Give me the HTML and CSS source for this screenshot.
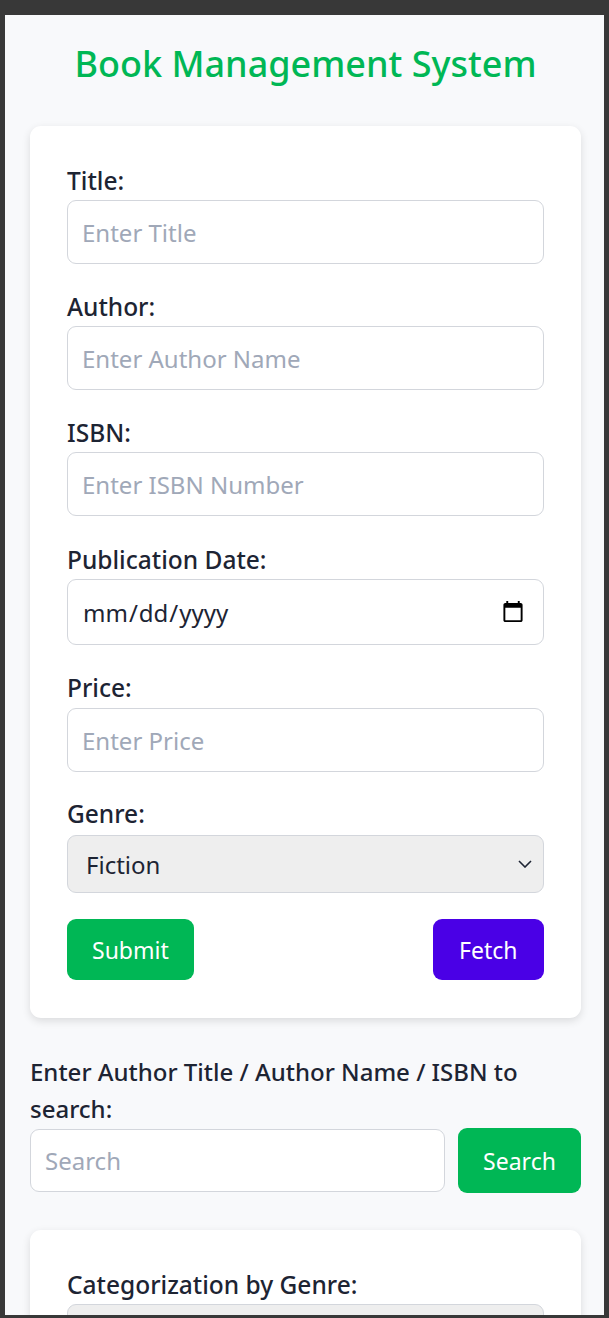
FILE: index.html
```html
<!DOCTYPE html>
<html lang="en">
<head>
<meta charset="utf-8">
<title>Book Management System</title>
<link rel="stylesheet" href="styles.css">
</head>
<body>
<div class="frame">
  <div class="page">
    <h1 class="title">Book Management System</h1>

    <form class="card">
      <div class="field f-title">
        <label class="label" for="title">Title:</label>
        <input class="input" id="title" type="text" placeholder="Enter Title">
      </div>
      <div class="field f-author">
        <label class="label" for="author">Author:</label>
        <input class="input" id="author" type="text" placeholder="Enter Author Name">
      </div>
      <div class="field f-isbn">
        <label class="label" for="isbn">ISBN:</label>
        <input class="input" id="isbn" type="text" placeholder="Enter ISBN Number">
      </div>
      <div class="field f-date">
        <label class="label" for="date">Publication Date:</label>
        <input class="input input-date" id="date" type="date">
      </div>
      <div class="field f-price">
        <label class="label" for="price">Price:</label>
        <input class="input" id="price" type="text" placeholder="Enter Price">
      </div>
      <div class="field f-genre">
        <label class="label" for="genre">Genre:</label>
        <div class="select-wrap">
          <select class="select" id="genre">
            <option>Fiction</option>
            <option>Non-Fiction</option>
            <option>Science</option>
          </select>
          <svg class="chevron" width="14" height="8" viewBox="0 0 14 8" aria-hidden="true"><path d="M1 1l6 6 6-6" fill="none" stroke="#1d2433" stroke-width="1.6"/></svg>
        </div>
      </div>
      <div class="actions">
        <button type="button" class="btn btn-green">Submit</button>
        <button type="button" class="btn btn-purple">Fetch</button>
      </div>
    </form>

    <div class="search">
      <label class="search-label" for="search">Enter Author Title / Author Name / ISBN to search:</label>
      <div class="search-row">
        <input class="input search-input" id="search" type="text" placeholder="Search">
        <button type="button" class="btn btn-green btn-search">Search</button>
      </div>
    </div>

    <div class="card card-genre">
      <label class="label" for="cat">Categorization by Genre:</label>
      <div class="select-wrap">
        <select class="select" id="cat">
          <option></option>
        </select>
        <svg class="chevron" width="14" height="8" viewBox="0 0 14 8" aria-hidden="true"><path d="M1 1l6 6 6-6" fill="none" stroke="#1d2433" stroke-width="1.6"/></svg>
      </div>
    </div>
  </div>
</div>
</body>
</html>
```

FILE: styles.css
```css
html, body {
  margin: 0;
  padding: 0;
  background: #383838;
  height: 1318px;
  overflow: hidden;
}

.frame {
  margin: 15px 5px 0 5px;
  height: 1300px;
  overflow: hidden;
  background: #f8f9fb;
}

.page {
  padding: 0 23px 0 25px;
  font-family: "Noto Sans", sans-serif;
  color: #1d2433;
}

.title {
  margin: 0;
  padding-top: 27px;
  height: 111px;
  box-sizing: border-box;
  font-size: 36px;
  line-height: 44px;
  font-weight: 500;
  color: #00b755;
  text-align: center;
}

.card {
  background: #fff;
  border-radius: 11px;
  box-shadow: 0 3px 8px rgba(0, 0, 0, 0.12);
  padding: 40px 37px 38px 37px;
  display: flex;
  flex-direction: column;
}

.field {
  display: flex;
  flex-direction: column;
  margin-bottom: 28px;
}

.f-isbn {
  margin-bottom: 29px;
}

.f-date {
  margin-bottom: 28px;
}

.f-price {
  margin-bottom: 27px;
}

.f-price .label {
  margin-bottom: 5px;
}

.f-genre {
  margin-bottom: 26px;
}

.f-genre .label {
  margin-bottom: 6px;
}

.label {
  font-size: 24.5px;
  line-height: 30px;
  margin-bottom: 4px;
  font-weight: 500;
  color: #1d2433;
}

.input {
  box-sizing: border-box;
  height: 64px;
  width: 100%;
  border: 1.5px solid #d3d6dc;
  border-radius: 9px;
  padding: 0 14px;
  font-family: inherit;
  font-size: 24px;
  color: #1d2433;
  background: #fff;
  outline: none;
}

.input::placeholder {
  color: #a0a8b8;
}

.input-date {
  height: 66px;
  padding-left: 14px;
  padding-right: 16px;
}

.select-wrap {
  position: relative;
}

.select {
  box-sizing: border-box;
  display: block;
  height: 58px;
  width: 100%;
  border: 1.5px solid #d3d6dc;
  border-radius: 9px;
  padding: 0 16px 0 18px;
  font-family: inherit;
  font-size: 24px;
  color: #1d2433;
  background: #eeeeee;
  appearance: none;
  -webkit-appearance: none;
}

.chevron {
  position: absolute;
  right: 12px;
  top: 25px;
  pointer-events: none;
}

.actions {
  display: flex;
  justify-content: space-between;
}

.btn {
  height: 61px;
  border: none;
  border-radius: 9px;
  padding: 0 25px;
  font-family: inherit;
  font-size: 23px;
  color: #fff;
}

.btn-green {
  background: #00b755;
}

.btn-purple {
  background: #4a00e6;
  padding: 0 26.5px;
}

.search {
  padding-top: 35px;
  padding-bottom: 37px;
}

.search-label {
  display: block;
  font-size: 24px;
  line-height: 37px;
  font-weight: 500;
  color: #1d2433;
  margin-bottom: 1px;
}

.search-row {
  display: flex;
  gap: 13px;
  align-items: center;
}

.search-input {
  flex: 1;
  height: 63px;
  width: auto;
  min-width: 0;
}

.btn-search {
  height: 65px;
  width: 123px;
  padding: 0;
}

.card-genre {
  padding-top: 40px;
  height: 200px;
}
```
